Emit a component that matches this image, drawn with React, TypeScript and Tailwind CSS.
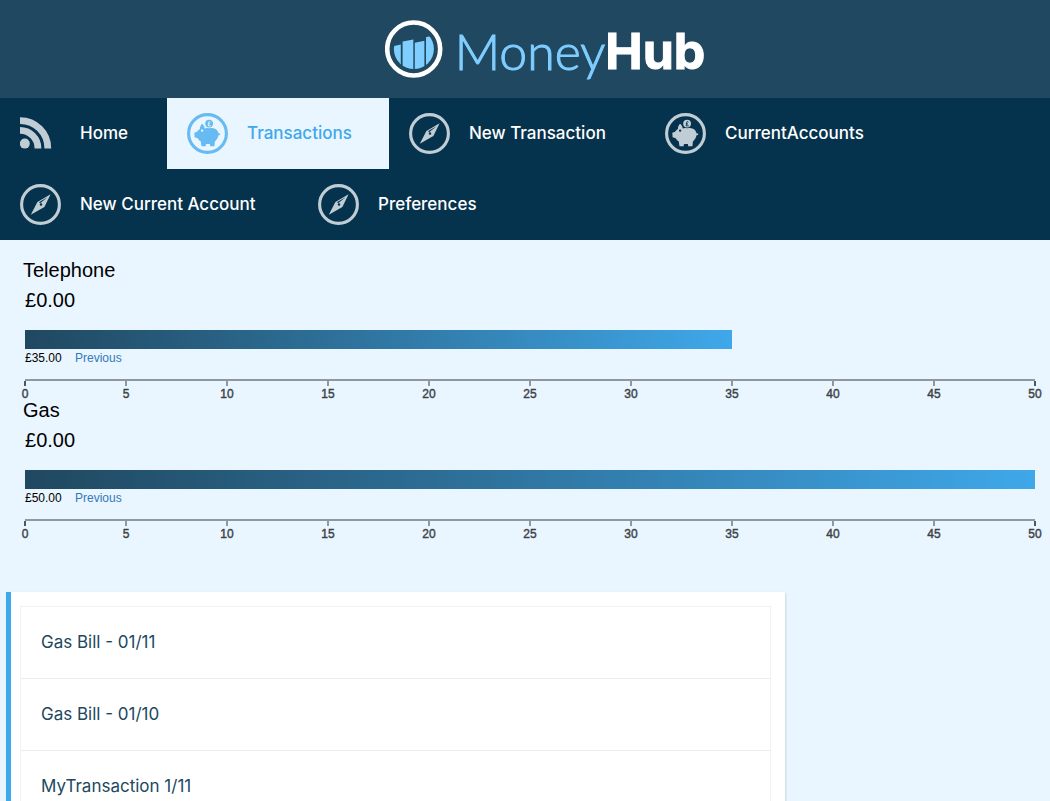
import React from 'react';

function CompassIcon() {
  return (
    <svg viewBox="0 0 41 41" className="size-[41px] shrink-0" aria-hidden="true">
      <circle cx="20.5" cy="20.5" r="18.9" fill="none" stroke="currentColor" strokeWidth="3.1" />
      <path
        fillRule="evenodd"
        fill="currentColor"
        d="M30.6 10.3L24.4 22.9L10.8 30.8L17.4 18ZM27.6 13.3L18.9 18.3L20.4 19ZM21 19.2A1.3 1.3 0 1 0 21 21.8A1.3 1.3 0 1 0 21 19.2Z"
      />
    </svg>
  );
}

function PiggyIcon() {
  return (
    <svg viewBox="0 0 41 41" className="size-[41px] shrink-0" aria-hidden="true">
      <circle cx="20.5" cy="20.5" r="18.9" fill="none" stroke="currentColor" strokeWidth="3.1" />
      <path
        fillRule="evenodd"
        fill="currentColor"
        d="M15 10.8C16.4 11.8 17.4 13.4 17.8 15.4C20.5 14.6 24.8 14.6 27.3 15.5C29.9 16.4 31.2 18.4 31.6 20.4L33.2 20.6L33.1 22L31.5 22.2C31 25 29.6 26.8 27.9 28.4L27.4 33.2H23.2L22.9 31.1H19L18.6 33.2H14.5L13.8 28.6C12.5 27.7 11.5 26.6 10.7 25.2L7.6 24.3L7.3 19.8L10.1 18.8C10.7 17.6 11.6 16.7 12.9 15.9C12.9 14 13.5 12.3 15 10.8ZM15.1 16.4A1.2 1.2 0 1 0 15.1 18.8A1.2 1.2 0 1 0 15.1 16.4Z"
      />
      <circle cx="22.1" cy="10.6" r="4.7" fill="var(--coin-gap)" />
      <circle cx="22.1" cy="10.6" r="3.9" fill="currentColor" />
      <path
        d="M23.6 9.3C23.1 8.2 21.5 8.4 21.6 9.7C21.7 11 22 11.5 21 12.8H23.8M20.8 10.8H23"
        fill="none"
        stroke="var(--coin-gap)"
        strokeWidth="0.9"
      />
    </svg>
  );
}

function FeedIcon() {
  return (
    <svg viewBox="0 0 41 41" className="size-[41px] shrink-0" aria-hidden="true">
      <g fill="none" stroke="currentColor">
        <path d="M0 7.6A27.6 27.6 0 0 1 27.8 35.4" strokeWidth="6.8" />
        <path d="M0 17.4A18 18 0 0 1 18 35.4" strokeWidth="6.8" />
      </g>
      <circle cx="4.8" cy="30.6" r="5" fill="currentColor" />
    </svg>
  );
}

function LogoMark() {
  return (
    <svg viewBox="0 0 58 58" className="size-[58px] shrink-0" aria-hidden="true">
      <circle cx="28.7" cy="29" r="26.5" fill="none" stroke="#ffffff" strokeWidth="4.6" />
      <clipPath id="logo-disc">
        <circle cx="28.9" cy="29" r="20" />
      </clipPath>
      <g fill="#7fceff" clipPath="url(#logo-disc)">
        <path d="M8 26.2L15.8 24.6V52H8Z" />
        <path d="M17.6 21.4L28.3 19.5V52H17.6Z" />
        <path d="M29.8 22.8L39.4 20.8V52H29.8Z" />
        <path d="M41 17.3L44.6 16.2L51 16V52H41Z" />
      </g>
    </svg>
  );
}

interface NavEntry {
  label: string;
  icon: () => React.ReactElement;
  width: string;
  active?: boolean;
}

const navEntries: NavEntry[] = [
  { label: 'Home', icon: FeedIcon, width: 'w-[167px]' },
  { label: 'Transactions', icon: PiggyIcon, width: 'w-[222px]', active: true },
  { label: 'New Transaction', icon: CompassIcon, width: 'w-[256px]' },
  { label: 'CurrentAccounts', icon: PiggyIcon, width: 'w-[260px]' },
  { label: 'New Current Account', icon: CompassIcon, width: 'w-[298px]' },
  { label: 'Preferences', icon: CompassIcon, width: 'w-[220px]' },
];

function NavItem({ label, icon: Icon, width, active }: NavEntry) {
  const tone = active
    ? 'bg-[#e9f6ff] text-[#3fa8ea] [--coin-gap:#e9f6ff]'
    : 'text-white [--coin-gap:#05324c]';
  return (
    <li className={width}>
      <a
        href="#"
        aria-current={active ? 'page' : undefined}
        className={`flex h-[71px] items-center whitespace-nowrap pl-5 text-[17px] font-medium ${tone}`}
      >
        <span className={`w-[60px] shrink-0 ${active ? 'text-[#68bbf2]' : 'text-[#c1cdd4]'}`}>
          <Icon />
        </span>
        {label}
      </a>
    </li>
  );
}

const AXIS_MAX = 50;
const ticks = [0, 5, 10, 15, 20, 25, 30, 35, 40, 45, 50];
const percent = (value: number) => `${(value / AXIS_MAX) * 100}%`;

function SpendChart({ name, current, previous }: { name: string; current: number; previous: number }) {
  return (
    <section className="h-[140px] pl-[25px] pr-[15px] font-['Liberation_Sans',sans-serif] text-black">
      <h2 className="-ml-[2px] text-xl leading-[30px]">{name}</h2>
      <p className="text-xl leading-[30px]">£{current.toFixed(2)}</p>
      <div className="pt-[15px]">
        <div
          className="h-[19px] bg-linear-to-r from-[#204860] to-[#3fa8ea]"
          style={{ width: percent(previous) }}
        />
      </div>
      <div className="flex h-[18px] text-xs leading-[18px]">
        <span className="w-[50px]">£{previous.toFixed(2)}</span>
        <a href="#" className="text-[#337ab7]">Previous</a>
      </div>
      <svg width="100%" height="28" className="mt-[12px] block overflow-visible" aria-label={`${name} scale`}>
        <g fill="#000000" fillOpacity="0.38">
          <rect x="0" y="0" width="100%" height="2" />
          {ticks.map((t) => (
            <rect
              key={t}
              x={percent(t)}
              y="2"
              width="2"
              height="5"
              transform="translate(-1 0)"
              fillOpacity={t === 0 || t === AXIS_MAX ? 0.65 : 0.38}
            />
          ))}
        </g>
        <g fontSize="12" textAnchor="middle" fill="#3b4145" stroke="#3b4145" strokeWidth="0.4">
          {ticks.map((t) => (
            <text key={t} x={percent(t)} y="19">{t}</text>
          ))}
        </g>
      </svg>
    </section>
  );
}

const transactions = ['Gas Bill - 01/11', 'Gas Bill - 01/10', 'MyTransaction 1/11'];

export default function App() {
  return (
    <div className="min-h-screen bg-[#e9f6ff] font-['Inter',sans-serif]">
      <header className="flex h-[98px] items-center justify-center bg-[#204860] pl-10">
        <LogoMark />
        <h1 className="ml-[12px] flex pt-1 text-[50px] leading-[60px]">
          <span className="font-['Lato',sans-serif] font-light text-[#7fceff] [-webkit-text-stroke:1px_#7fceff]">
            Money
          </span>
          <span className="font-bold text-white [-webkit-text-stroke:1px_#ffffff]">Hub</span>
        </h1>
      </header>

      <nav className="bg-[#05324c]">
        <ul className="flex flex-wrap">
          {navEntries.map((entry) => (
            <NavItem key={entry.label} {...entry} />
          ))}
        </ul>
      </nav>

      <main>
        <div className="pt-[15px]">
          <SpendChart name="Telephone" current={0} previous={35} />
          <SpendChart name="Gas" current={0} previous={50} />
        </div>

        <div className="mt-[57px] w-3/4 pl-[6px] pr-[3px]">
          <div className="border-l-[5px] border-[#3fa8ea] bg-white pb-4 pl-[9px] pr-[14px] pt-[14px] shadow-[1px_1px_2px_rgba(0,0,0,0.12)]">
            <ul className="border border-[#f2f2f2]">
              {transactions.map((item) => (
                <li key={item} className="border-b border-[#ececec]">
                  <a href="#" className="block h-[71px] pl-5 text-[17px] leading-[71px] text-[#204860]">
                    {item}
                  </a>
                </li>
              ))}
            </ul>
          </div>
        </div>
      </main>
    </div>
  );
}
